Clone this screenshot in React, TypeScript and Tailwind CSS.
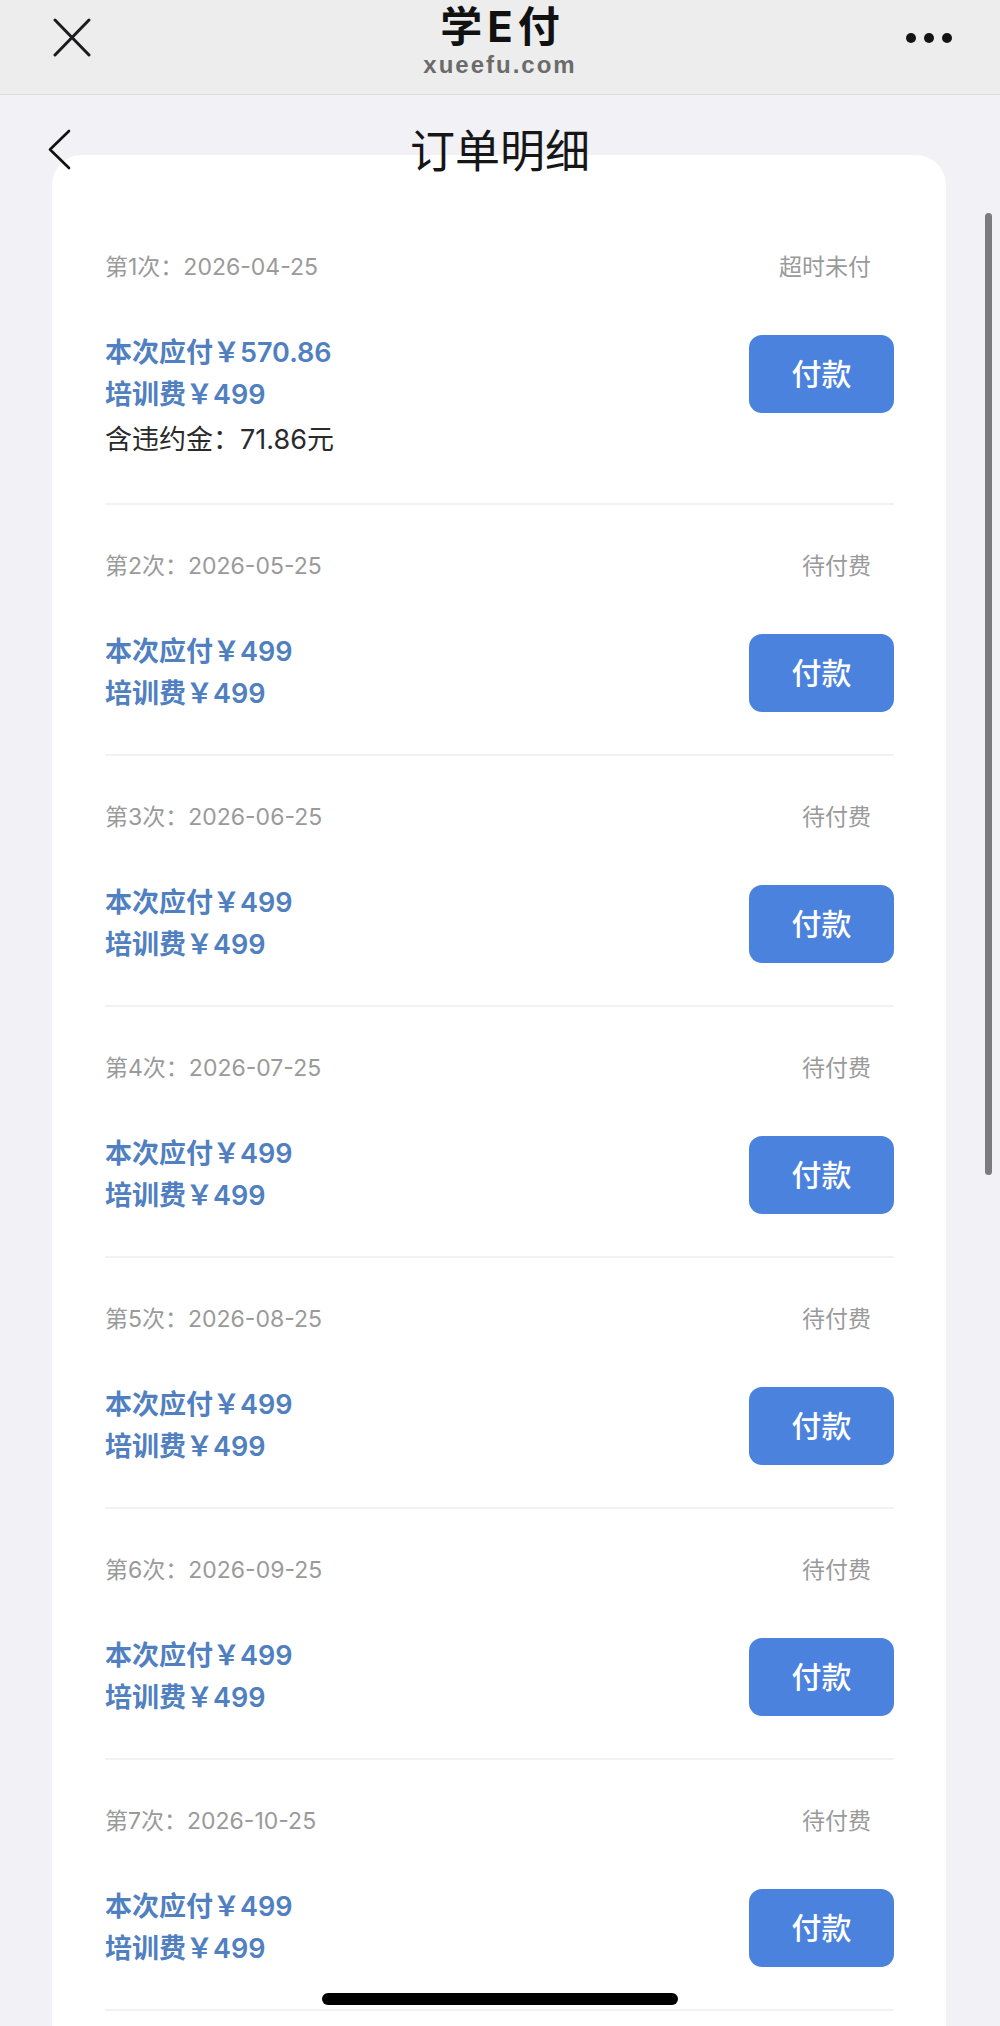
import React from "react";

const rows = [
  { n: 1, date: "2026-04-25", status: "超时未付", pay: "570.86", fee: "499", extra: "71.86" },
  { n: 2, date: "2026-05-25", status: "待付费", pay: "499", fee: "499" },
  { n: 3, date: "2026-06-25", status: "待付费", pay: "499", fee: "499" },
  { n: 4, date: "2026-07-25", status: "待付费", pay: "499", fee: "499" },
  { n: 5, date: "2026-08-25", status: "待付费", pay: "499", fee: "499" },
  { n: 6, date: "2026-09-25", status: "待付费", pay: "499", fee: "499" },
  { n: 7, date: "2026-10-25", status: "待付费", pay: "499", fee: "499" },
];

const font = { fontFamily: 'Inter, "Noto Sans CJK SC", "Noto Sans", sans-serif' };

function Row({ r, first }: { r: (typeof rows)[number]; first: boolean }) {
  return (
    <div className="border-b-2 border-[#f2f2f4] pt-[46px] pb-[39px]">
      <div className="flex h-[30px] items-center justify-between text-[23px] leading-[30px] text-[#9a9a9a]">
        <span>
          第{r.n}次：{r.date}
        </span>
        <span className="mr-[23px]">{r.status}</span>
      </div>
      <div className="mt-[50px] flex items-start justify-between">
        <div className="flex flex-col">
          <div className="h-[42px] text-[27px] font-semibold leading-[42px] text-[#5080c0]">
            本次应付￥{r.pay}
          </div>
          <div className="h-[42px] text-[27px] font-semibold leading-[42px] text-[#5080c0]">
            培训费￥{r.fee}
          </div>
          {first && r.extra && (
            <div className="h-[48px] text-[27px] leading-[48px] text-[#2a2a2a]">
              含违约金：{r.extra}元
            </div>
          )}
        </div>
        <div className="mt-[3px] flex h-[78px] w-[145px] items-center justify-center rounded-[13px] bg-[#4a82de] text-[30px] font-medium text-white">
          付款
        </div>
      </div>
    </div>
  );
}

export default function App() {
  return (
    <div className="relative h-[2026px] w-[1000px] overflow-hidden bg-[#f1f1f6]" style={font}>
      {/* WeChat header */}
      <div className="grid h-[95px] grid-cols-[1fr_auto_1fr] border-b border-[#dcdcdf] bg-[#ededee]">
        <div className="pl-[53px] pt-[18px]">
          <svg width="38" height="39" viewBox="0 0 38 39">
            <path d="M2 2 L36 37 M36 2 L2 37" stroke="#1c1c1e" strokeWidth="3" strokeLinecap="round" fill="none" />
          </svg>
        </div>
        <div className="flex flex-col items-center pt-[5px]">
          <div className="pl-[5px] text-[42px] font-bold leading-[44px] tracking-[5px] text-[#111]">学E付</div>
          <div
            className="mt-[2px] text-[24px] font-bold leading-[28px] tracking-[2px] text-[#6b6b6b]"
            style={{ fontFamily: '"Liberation Sans", Arial, sans-serif' }}
          >
            xueefu.com
          </div>
        </div>
        <div className="flex justify-end pr-[48px] pt-[33px]">
          <div className="flex gap-[8px]">
            <div className="h-[10px] w-[10px] rounded-full bg-[#141414]" />
            <div className="h-[10px] w-[10px] rounded-full bg-[#141414]" />
            <div className="h-[10px] w-[10px] rounded-full bg-[#141414]" />
          </div>
        </div>
      </div>

      {/* page nav */}
      <div className="relative z-10 grid h-[60px] grid-cols-[1fr_auto_1fr] pt-[34px]">
        <div className="pl-[48px]">
          <svg width="23" height="41" viewBox="0 0 23 41">
            <polyline points="21,2 2,20.5 21,39" stroke="#111" strokeWidth="2.6" fill="none" strokeLinecap="round" strokeLinejoin="round" />
          </svg>
        </div>
        <div className="text-[45px] leading-[45px] text-[#161616]">订单明细</div>
        <div />
      </div>

      {/* card */}
      <div className="ml-[52px] h-[2000px] w-[894px] rounded-[30px] bg-white pl-[53px] pr-[52px] pt-[51px]">
        {rows.map((r, i) => (
          <Row key={r.n} r={r} first={i === 0} />
        ))}
      </div>

      {/* scrollbar */}
      <div className="absolute left-[985px] top-[213px] h-[962px] w-[7px] rounded-full bg-[#7b7b80]" />

      {/* home indicator */}
      <div className="absolute left-[322px] top-[1993px] h-[12px] w-[356px] rounded-full bg-black" />
    </div>
  );
}
